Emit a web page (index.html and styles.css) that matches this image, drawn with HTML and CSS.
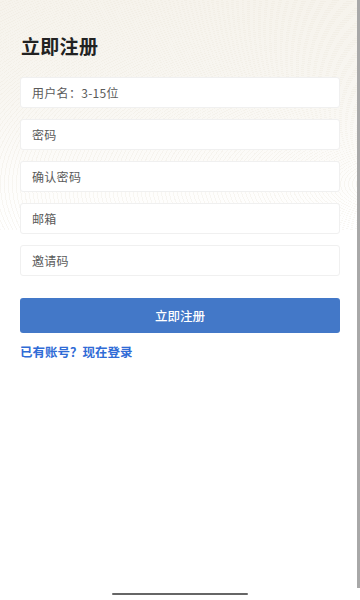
FILE: index.html
```html
<!DOCTYPE html>
<html lang="zh">
<head>
<meta charset="utf-8">
<meta name="viewport" content="width=device-width, initial-scale=1">
<link rel="stylesheet" href="styles.css">
</head>
<body>
<div class="page">
  <h1 class="title">立即注册</h1>
  <form class="form">
    <input class="field" type="text" placeholder="用户名：3-15位">
    <input class="field" type="password" placeholder="密码">
    <input class="field" type="password" placeholder="确认密码">
    <input class="field" type="text" placeholder="邮箱">
    <input class="field" type="text" placeholder="邀请码">
    <button class="submit" type="button">立即注册</button>
  </form>
  <a class="login-link" href="#">已有账号？现在登录</a>
</div>
<div class="scrollbar"></div>
<div class="home-indicator"></div>
</body>
</html>
```
FILE: styles.css
```css
html, body {
  margin: 0;
  padding: 0;
  height: 100%;
}
body {
  font-family: "Noto Sans CJK SC", "Noto Sans", sans-serif;
  background: #ffffff;
  overflow: hidden;
}
.page {
  min-height: 600px;
  box-sizing: border-box;
  padding: 33px 20px 0 20px;
  background:
    repeating-radial-gradient(ellipse at 110% 80%, rgba(230,224,210,0) 0 3px, rgba(230,224,210,0.25) 3px 4px) top/100% 230px no-repeat,
    linear-gradient(180deg, #f6f3ec 0%, #f8f6f1 40%, #fdfcfa 75%, #ffffff 100%) top/100% 230px no-repeat,
    #ffffff;
}
.title {
  margin: 0 0 0 1px;
  font-size: 19px;
  font-weight: 700;
  color: #222;
  line-height: 26px;
  letter-spacing: 0.3px;
}
.form {
  display: flex;
  flex-direction: column;
  gap: 11px;
  margin-top: 18px;
}
.field {
  height: 31px;
  box-sizing: border-box;
  border: 1px solid #f0f0f0;
  border-radius: 3px;
  background: #ffffff;
  padding: 0 11px;
  font-family: inherit;
  font-size: 12px;
  letter-spacing: 0.3px;
  color: #333;
  outline: none;
}
.field::placeholder {
  color: #5a5a5a;
}
.submit {
  margin-top: 11px;
  height: 35px;
  border: none;
  border-radius: 3px;
  background: #4378c8;
  color: #ffffff;
  font-family: inherit;
  font-size: 12.5px;
  font-weight: 500;
}
.login-link {
  display: block;
  margin-top: 10px;
  font-size: 12.5px;
  font-weight: 700;
  color: #2f6bd6;
  text-decoration: none;
  line-height: 18px;
}
.scrollbar {
  position: absolute;
  top: 0;
  right: 0;
  width: 3px;
  height: 588px;
  background: #a8a8a8;
}
.home-indicator {
  position: absolute;
  left: 112px;
  top: 593px;
  width: 136px;
  height: 2px;
  border-radius: 1px;
  background: #666;
}
```
